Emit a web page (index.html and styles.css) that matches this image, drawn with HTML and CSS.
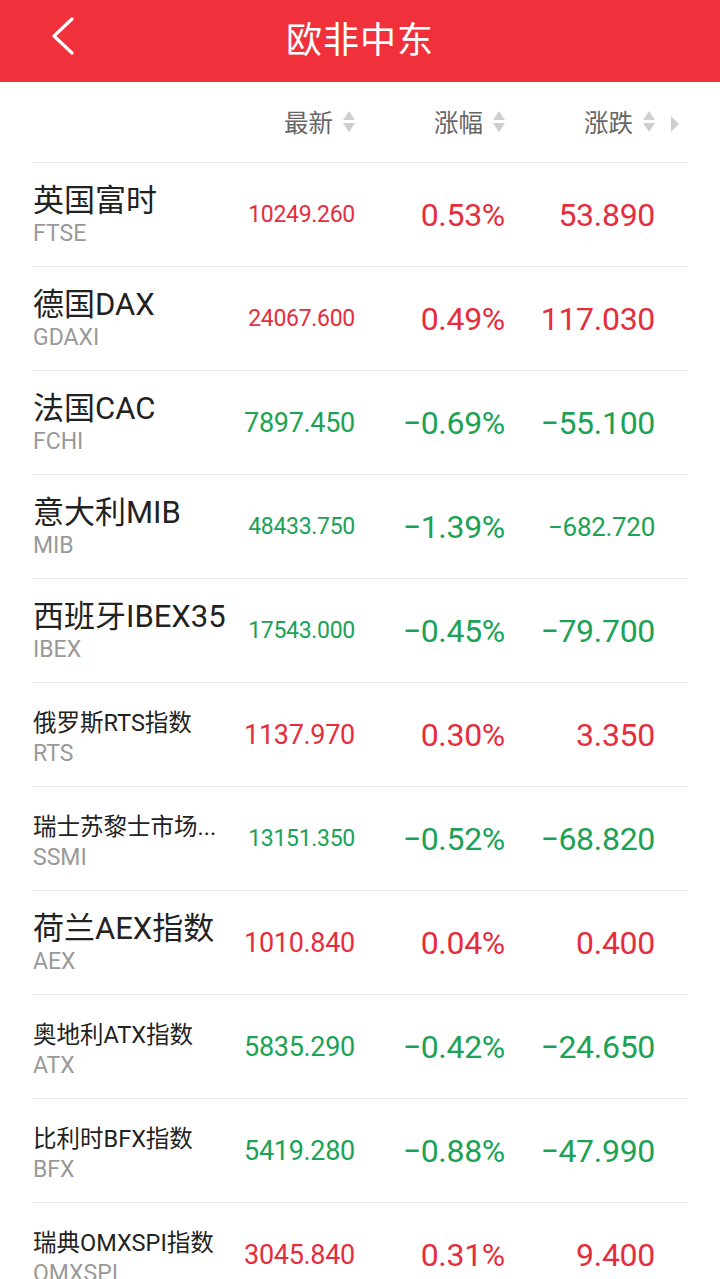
FILE: index.html
```html
<!DOCTYPE html>
<html lang="zh-CN">

<head>
    <meta charset="UTF-8">
    <meta name="viewport" content="width=device-width, initial-scale=1.0">
    <title>欧非中东</title>

    <link rel="stylesheet" href="styles.css">

</head>

<body>
    <!-- Top bar -->
    <header class="topbar">
        <a class="back" href="#">
            <svg width="26" height="38" viewBox="0 0 26 38">
                <polyline points="22,2 4,19 22,36" fill="none" stroke="#fff" stroke-width="3.2" stroke-linecap="round" stroke-linejoin="round" />
            </svg>
        </a>
        <h1 class="title">欧非中东</h1>
    </header>

    <div class="list">
        <!-- Column headers -->
        <div class="row head">
            <div></div>
            <div class="col-label">最新<span class="sort"><i class="up"></i><i class="down"></i></span></div>
            <div class="col-label">涨幅<span class="sort"><i class="up"></i><i class="down"></i></span></div>
            <div class="col-label">涨跌<span class="sort"><i class="up"></i><i class="down"></i></span></div>
            <i class="more"></i>
        </div>

        <div class="row rise">
            <div class="name"><div class="cn">英国富时</div><div class="code">FTSE</div></div>
            <div class="num last long">10249.260</div>
            <div class="num pct">0.53%</div>
            <div class="num chg">53.890</div>
        </div>

        <div class="row rise">
            <div class="name"><div class="cn">德国DAX</div><div class="code">GDAXI</div></div>
            <div class="num last long">24067.600</div>
            <div class="num pct">0.49%</div>
            <div class="num chg">117.030</div>
        </div>

        <div class="row fall">
            <div class="name"><div class="cn">法国CAC</div><div class="code">FCHI</div></div>
            <div class="num last">7897.450</div>
            <div class="num pct">−0.69%</div>
            <div class="num chg">−55.100</div>
        </div>

        <div class="row fall">
            <div class="name"><div class="cn">意大利MIB</div><div class="code">MIB</div></div>
            <div class="num last long">48433.750</div>
            <div class="num pct">−1.39%</div>
            <div class="num chg long">−682.720</div>
        </div>

        <div class="row fall">
            <div class="name"><div class="cn">西班牙IBEX35</div><div class="code">IBEX</div></div>
            <div class="num last long">17543.000</div>
            <div class="num pct">−0.45%</div>
            <div class="num chg">−79.700</div>
        </div>

        <div class="row rise">
            <div class="name small"><div class="cn">俄罗斯RTS指数</div><div class="code">RTS</div></div>
            <div class="num last">1137.970</div>
            <div class="num pct">0.30%</div>
            <div class="num chg">3.350</div>
        </div>

        <div class="row fall">
            <div class="name small"><div class="cn">瑞士苏黎士市场...</div><div class="code">SSMI</div></div>
            <div class="num last long">13151.350</div>
            <div class="num pct">−0.52%</div>
            <div class="num chg">−68.820</div>
        </div>

        <div class="row rise">
            <div class="name"><div class="cn">荷兰AEX指数</div><div class="code">AEX</div></div>
            <div class="num last">1010.840</div>
            <div class="num pct">0.04%</div>
            <div class="num chg">0.400</div>
        </div>

        <div class="row fall">
            <div class="name small"><div class="cn">奥地利ATX指数</div><div class="code">ATX</div></div>
            <div class="num last">5835.290</div>
            <div class="num pct">−0.42%</div>
            <div class="num chg">−24.650</div>
        </div>

        <div class="row fall">
            <div class="name small"><div class="cn">比利时BFX指数</div><div class="code">BFX</div></div>
            <div class="num last">5419.280</div>
            <div class="num pct">−0.88%</div>
            <div class="num chg">−47.990</div>
        </div>

        <div class="row rise">
            <div class="name small"><div class="cn">瑞典OMXSPI指数</div><div class="code">OMXSPI</div></div>
            <div class="num last">3045.840</div>
            <div class="num pct">0.31%</div>
            <div class="num chg">9.400</div>
        </div>
    </div>
</body>

</html>
```

FILE: styles.css
```css
body {
    margin: 0;
    font-family: Roboto, "Noto Sans CJK SC", sans-serif;
    background: #fff;
    color: #222;
}

/* Top bar */
.topbar {
    height: 82px;
    background: #f0313b;
    display: flex;
    align-items: center;
    justify-content: center;
    position: relative;
}

.back {
    position: absolute;
    left: 50px;
    top: 17px;
    display: block;
    height: 38px;
}

.title {
    margin: 0;
    margin-top: -8px;
    color: #fff;
    font-family: "Noto Sans CJK SC", sans-serif;
    font-size: 36px;
    font-weight: 400;
    letter-spacing: 1px;
}

/* List */
.list {
    margin: 0 32px;
}

.row {
    display: grid;
    grid-template-columns: 208px 115px 150px 150px;
    align-items: center;
    height: 104px;
    border-top: 1px solid #e8e8e8;
    box-sizing: border-box;
    white-space: nowrap;
}

.row.head {
    height: 80px;
    border-top: none;
    position: relative;
}

.col-label {
    display: flex;
    align-items: center;
    justify-content: flex-end;
    gap: 10px;
    font-family: "Noto Sans CJK SC", sans-serif;
    font-size: 24.5px;
    color: #666;
    margin-top: -2px;
}

.sort {
    display: flex;
    flex-direction: column;
    gap: 3px;
}

.sort i {
    display: block;
    width: 0;
    height: 0;
    border-left: 6px solid transparent;
    border-right: 6px solid transparent;
}

.sort .up {
    border-bottom: 9px solid #cfcfcf;
}

.sort .down {
    border-top: 9px solid #cfcfcf;
}

.more {
    position: absolute;
    left: 639px;
    top: 34px;
    width: 0;
    height: 0;
    border-top: 8px solid transparent;
    border-bottom: 8px solid transparent;
    border-left: 8px solid #cfcfcf;
}

/* Name column */
.name {
    padding-left: 1px;
    margin-top: 3px;
}

.name .cn {
    font-size: 31px;
    line-height: 36px;
    color: #222;
}

.name.small .cn {
    font-size: 23.5px;
    padding-top: 4px;
    line-height: 32px;
}

.name .code {
    font-size: 23px;
    line-height: 30px;
    color: #999;
}

/* Numbers */
.num {
    text-align: right;
    font-size: 32px;
    letter-spacing: -0.3px;
}

.num.last {
    font-size: 27px;
}

.num.last.long {
    font-size: 23px;
}

.num.chg.long {
    font-size: 26px;
}

.rise .num {
    color: #e52d3d;
}

.fall .num {
    color: #1ba255;
}
```
